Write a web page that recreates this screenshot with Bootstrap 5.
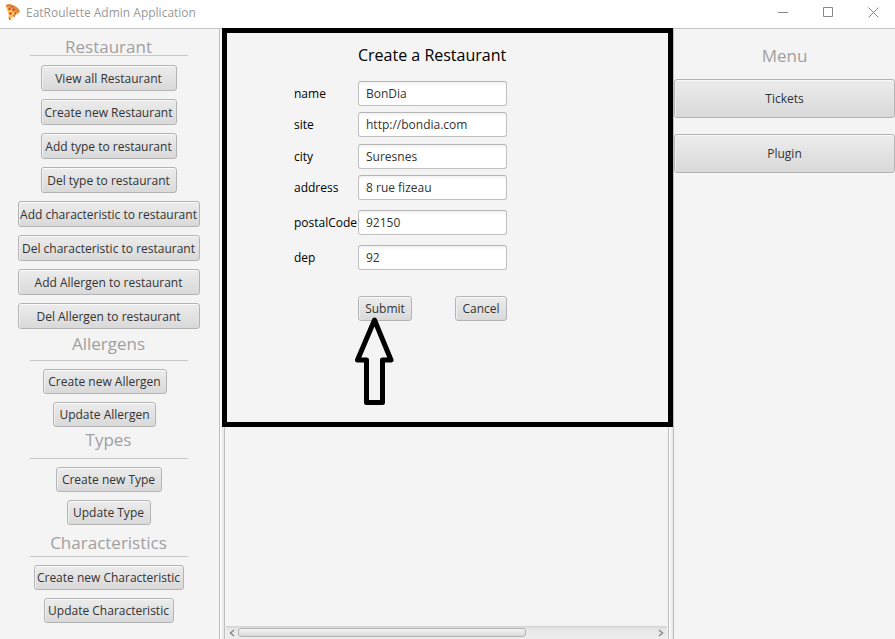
<!DOCTYPE html>
<html lang="en">
<head>
<meta charset="utf-8">
<meta name="viewport" content="width=device-width, initial-scale=1">
<title>EatRoulette Admin Application</title>
<link href="https://cdn.jsdelivr.net/npm/bootstrap@5.3.0/dist/css/bootstrap.min.css" rel="stylesheet">
<style>
body{font-family:"Open Sans","Noto Sans",sans-serif;font-size:12px;line-height:16px;background:#f4f4f4;color:#000}
.titlebar{height:29px;background:#fff;border-bottom:1px solid #c4c4c4;color:#999;padding:0 8px 4px 5px}
.app-name{margin-left:5px;padding-top:2px}
.win-btn{width:45px;height:24px;border:0;background:none;padding:0}
.win-controls{margin-right:-9px}
.side-left{width:219px;padding-right:2px}
.side-right{width:221px}
.divider{width:6px;border:solid #bdbdbd;border-width:0 1px;background:linear-gradient(90deg,#fff,#e4e4e4)}
.fx-btn{font-size:12px;line-height:15px;color:#333;height:25px;padding:4px 0;border:1px solid #b4b4b4;border-radius:3px;background:linear-gradient(#ececec,#d9d9d9);box-shadow:inset 0 1px 0 #fafafa,inset 1px 0 0 #f0f0f0;white-space:nowrap}
.fx-btn:hover,.fx-btn:active{color:#333;background:linear-gradient(#f4f4f4,#e2e2e2);border-color:#aaa}
.stack{gap:8px;display:flex;flex-direction:column;align-items:center}
.stack-main .fx-btn{height:26px;width:136px}
.stack-main .fx-wide{width:182px}
.w-create-al{width:124px}.w-up-al{width:103px}.w-create-ty{width:106px}.w-up-ty{width:84px}.w-create-ch{width:150px}.w-up-ch{width:130px}
.w-submit{width:54px}.w-cancel{width:52px}
.shift-left{padding-right:8px}
.sect{font-size:17px;font-weight:400;line-height:30px;height:32px;width:158px;margin:0 0 8px;border-bottom:1px solid #c8c8c8;color:#a0a0a0;text-align:center}
.sect-first{height:27px;line-height:35px;margin-bottom:9px}
.sect-low{line-height:36px}
.sect-mid{line-height:26px}
.menu-title{font-size:17px;font-weight:400;line-height:24px;color:#a0a0a0;margin:15px 0 11px}
.menu-btn{height:39px;margin-bottom:16px}
.form-pane{padding:15px 0 106px 69px}
.frame{position:absolute;inset:-1px -5px 0 -3px;border:5px solid #000;pointer-events:none}
.form-grid{width:213px}
.form-title{font-size:16px;font-weight:400;line-height:22px;margin:0 0 15px 64px;white-space:nowrap}
.field-row{display:flex;align-items:center;margin-bottom:6px}
.field-row label{width:64px}
.gap-city{margin-bottom:7px}
.gap-wide{margin-bottom:10px}
.fx-input{flex:1;min-width:0;height:25px;font-size:12px;color:#333;padding:0 7px;border:1px solid #c0c0c0;border-top-color:#b4b4b4;border-radius:3px;background:linear-gradient(#f2f2f2,#fff 4px)}
.actions{margin:26px 0 0 64px}
.arrow{position:absolute;left:-4px;top:18px;pointer-events:none}
.scroller{height:13px;margin:0 1px;background:linear-gradient(#dcdcdc,#e8e8e8 3px,#ededed);border-top:1px solid #d4d4d4;padding-bottom:1px}
.scroll-btn{width:12px;height:11px;border:0;padding:0;background:none;display:flex;align-items:center;justify-content:center}
.thumb{width:69%;height:9px;border:1px solid #b4b4b4;border-radius:3px;background:linear-gradient(#f4f4f4,#dadada)}
</style>
</head>
<body class="min-vh-100 d-flex flex-column">
<header class="titlebar d-flex align-items-center">
  <svg width="16" height="18" viewBox="0 0 16 18" aria-hidden="true">
    <path d="M1 4Q9 4 14 9L11 12 9 13 5 17 3 15 4 13Z" fill="#ffc45a"/>
    <path d="M1 2Q3 0 8 2T15 8L13 11Q9 5 1 4Z" fill="#d98f3e"/>
    <path d="M4 13 6 17 4 17ZM8 12 11 11 9 15Z" fill="#b77b45"/>
    <g fill="#dc3b2f"><circle cx="4.500" cy="6" r="1.200"/><circle cx="8.500" cy="7" r="1.300"/><circle cx="5.500" cy="10.500" r="1.200"/><circle cx="10.500" cy="10" r="1.100"/><circle cx="7" cy="3.500" r=".8"/></g>
  </svg>
  <span class="app-name">EatRoulette Admin Application</span>
  <div class="win-controls ms-auto d-flex">
    <button class="win-btn" aria-label="Minimize"><svg width="11" height="11"><path d="M0 5.500H10" stroke="#888"/></svg></button>
    <button class="win-btn" aria-label="Maximize"><svg width="11" height="11"><path d="M.5.500H9.500V9.500H.5Z" fill="none" stroke="#888"/></svg></button>
    <button class="win-btn" aria-label="Close"><svg width="11" height="11"><path d="M.5.500 10.500 10.500M10.500.500.500 10.500" stroke="#888"/></svg></button>
  </div>
</header>
<div class="d-flex flex-grow-1">
  <nav class="side-left flex-shrink-0 d-flex flex-column align-items-center" aria-label="Management">
    <h2 class="sect sect-first">Restaurant</h2>
    <div class="stack stack-main">
      <button class="btn fx-btn">View all Restaurant</button>
      <button class="btn fx-btn">Create new Restaurant</button>
      <button class="btn fx-btn">Add type to restaurant</button>
      <button class="btn fx-btn">Del type to restaurant</button>
      <button class="btn fx-btn fx-wide">Add characteristic to restaurant</button>
      <button class="btn fx-btn fx-wide">Del characteristic to restaurant</button>
      <button class="btn fx-btn fx-wide">Add Allergen to restaurant</button>
      <button class="btn fx-btn fx-wide">Del Allergen to restaurant</button>
    </div>
    <h2 class="sect">Allergens</h2>
    <div class="stack shift-left">
      <button class="btn fx-btn w-create-al">Create new Allergen</button>
      <button class="btn fx-btn w-up-al">Update Allergen</button>
    </div>
    <h2 class="sect sect-mid">Types</h2>
    <div class="stack">
      <button class="btn fx-btn w-create-ty">Create new Type</button>
      <button class="btn fx-btn w-up-ty">Update Type</button>
    </div>
    <h2 class="sect sect-low">Characteristics</h2>
    <div class="stack">
      <button class="btn fx-btn w-create-ch">Create new Characteristic</button>
      <button class="btn fx-btn w-up-ch">Update Characteristic</button>
    </div>
  </nav>
  <div class="divider flex-shrink-0"></div>
  <main class="flex-grow-1 d-flex flex-column">
    <section class="form-pane position-relative">
      <form class="form-grid">
        <h1 class="form-title">Create a Restaurant</h1>
        <div class="field-row"><label for="name">name</label><input class="fx-input" id="name" value="BonDia"></div>
        <div class="field-row gap-city"><label for="site">site</label><input class="fx-input" id="site" value="http://bondia.com"></div>
        <div class="field-row"><label for="city">city</label><input class="fx-input" id="city" value="Suresnes"></div>
        <div class="field-row gap-wide"><label for="address">address</label><input class="fx-input" id="address" value="8 rue fizeau"></div>
        <div class="field-row gap-wide"><label for="postal">postalCode</label><input class="fx-input" id="postal" value="92150"></div>
        <div class="field-row"><label for="dep">dep</label><input class="fx-input" id="dep" value="92"></div>
        <div class="actions d-flex justify-content-between position-relative">
          <button type="button" class="btn fx-btn w-submit">Submit</button>
          <button type="button" class="btn fx-btn w-cancel">Cancel</button>
          <svg class="arrow" width="42" height="94" viewBox="354 314 42 94" aria-hidden="true"><path d="M374.500 320 391 360H382.500V402.500H366.500V360H357.500Z" fill="#f4f4f4" stroke="#000" stroke-width="5" stroke-linejoin="round"/></svg>
        </div>
      </form>
      <div class="frame"></div>
    </section>
    <div class="scroller d-flex align-items-center mt-auto">
      <button class="scroll-btn" aria-label="Scroll left"><svg width="6" height="8"><path d="M5 1 1.500 4 5 7" fill="none" stroke="#888" stroke-width="1.500"/></svg></button>
      <div class="flex-grow-1"><div class="thumb"></div></div>
      <button class="scroll-btn" aria-label="Scroll right"><svg width="6" height="8"><path d="M1 1 4.500 4 1 7" fill="none" stroke="#888" stroke-width="1.500"/></svg></button>
    </div>
  </main>
  <div class="divider flex-shrink-0"></div>
  <aside class="side-right flex-shrink-0 d-flex flex-column">
    <h2 class="menu-title text-center">Menu</h2>
    <button class="btn fx-btn menu-btn">Tickets</button>
    <button class="btn fx-btn menu-btn">Plugin</button>
  </aside>
</div>
<script src="https://cdn.jsdelivr.net/npm/bootstrap@5.3.0/dist/js/bootstrap.bundle.min.js"></script>
</body>
</html>
